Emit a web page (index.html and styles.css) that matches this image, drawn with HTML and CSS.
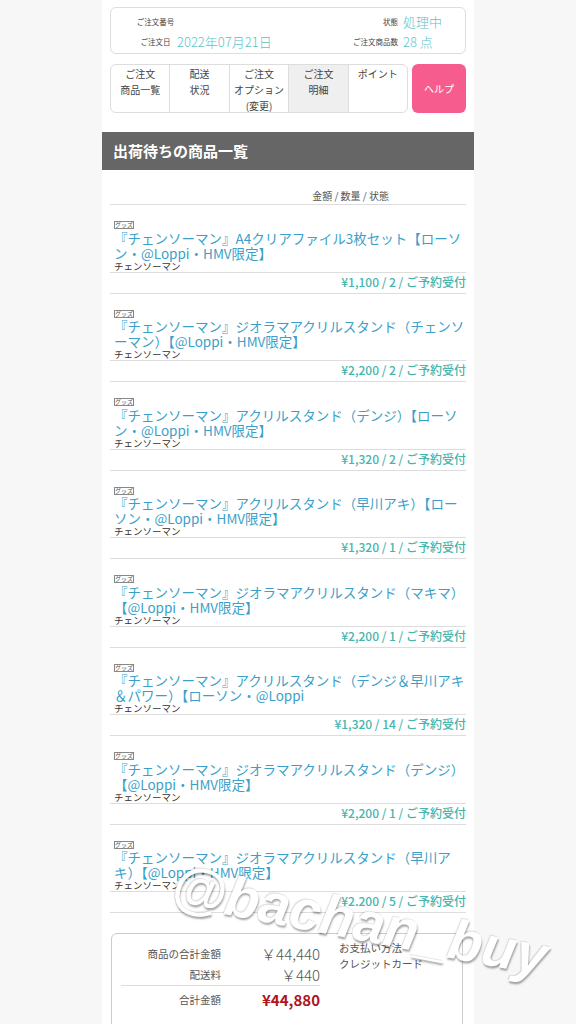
FILE: index.html
```html
<!DOCTYPE html>
<html lang="ja">
<head>
<meta charset="utf-8">
<title>ご注文明細</title>
<link rel="stylesheet" href="styles.css">
</head>
<body>
<div class="page">
  <div class="order-info">
    <span class="lbl lbl-left">ご注文番号</span><span class="val"></span><span class="lbl lbl-right">状態</span><span class="val">処理中</span>
    <span class="lbl lbl-left">ご注文日</span><span class="val">2022年07月21日</span><span class="lbl lbl-right">ご注文商品数</span><span class="val">28 点</span>
  </div>

  <div class="nav">
    <div class="tabs">
      <a class="tab">ご注文<br>商品一覧</a>
      <a class="tab">配送<br>状況</a>
      <a class="tab">ご注文<br>オプション<br>(変更)</a>
      <a class="tab tab-active">ご注文<br>明細</a>
      <a class="tab">ポイント</a>
    </div>
    <a class="help">ヘルプ</a>
  </div>

  <h2 class="section-title">出荷待ちの商品一覧</h2>

  <div class="list-head">金額 / 数量 / 状態</div>

  <ul class="items">
    <li class="item">
      <div class="item-main">
        <span class="tag">グッズ</span>
        <a class="item-title">『チェンソーマン』A4クリアファイル3枚セット【ローソン・@Loppi・HMV限定】</a>
        <div class="item-sub">チェンソーマン</div>
      </div>
      <div class="item-price">¥1,100 / 2 / ご予約受付</div>
    </li>
    <li class="item">
      <div class="item-main">
        <span class="tag">グッズ</span>
        <a class="item-title">『チェンソーマン』ジオラマアクリルスタンド（チェンソーマン）【@Loppi・HMV限定】</a>
        <div class="item-sub">チェンソーマン</div>
      </div>
      <div class="item-price">¥2,200 / 2 / ご予約受付</div>
    </li>
    <li class="item">
      <div class="item-main">
        <span class="tag">グッズ</span>
        <a class="item-title">『チェンソーマン』アクリルスタンド（デンジ）【ローソン・@Loppi・HMV限定】</a>
        <div class="item-sub">チェンソーマン</div>
      </div>
      <div class="item-price">¥1,320 / 2 / ご予約受付</div>
    </li>
    <li class="item">
      <div class="item-main">
        <span class="tag">グッズ</span>
        <a class="item-title">『チェンソーマン』アクリルスタンド（早川アキ）【ローソン・@Loppi・HMV限定】</a>
        <div class="item-sub">チェンソーマン</div>
      </div>
      <div class="item-price">¥1,320 / 1 / ご予約受付</div>
    </li>
    <li class="item">
      <div class="item-main">
        <span class="tag">グッズ</span>
        <a class="item-title">『チェンソーマン』ジオラマアクリルスタンド（マキマ）【@Loppi・HMV限定】</a>
        <div class="item-sub">チェンソーマン</div>
      </div>
      <div class="item-price">¥2,200 / 1 / ご予約受付</div>
    </li>
    <li class="item">
      <div class="item-main">
        <span class="tag">グッズ</span>
        <a class="item-title">『チェンソーマン』アクリルスタンド（デンジ＆早川アキ＆パワー）【ローソン・@Loppi</a>
        <div class="item-sub">チェンソーマン</div>
      </div>
      <div class="item-price">¥1,320 / 14 / ご予約受付</div>
    </li>
    <li class="item">
      <div class="item-main">
        <span class="tag">グッズ</span>
        <a class="item-title">『チェンソーマン』ジオラマアクリルスタンド（デンジ）【@Loppi・HMV限定】</a>
        <div class="item-sub">チェンソーマン</div>
      </div>
      <div class="item-price">¥2,200 / 1 / ご予約受付</div>
    </li>
    <li class="item">
      <div class="item-main">
        <span class="tag">グッズ</span>
        <a class="item-title">『チェンソーマン』ジオラマアクリルスタンド（早川アキ）【@Loppi・HMV限定】</a>
        <div class="item-sub">チェンソーマン</div>
      </div>
      <div class="item-price">¥2.200 / 5 / ご予約受付</div>
    </li>
  </ul>

  <div class="summary">
    <div class="totals">
      <span class="t-lbl">商品の合計金額</span><span class="t-val">￥44,440</span>
      <span class="t-lbl">配送料</span><span class="t-val">￥440</span>
      <span class="t-lbl t-grand">合計金額</span><span class="t-val t-grand t-grand-val">¥44,880</span>
    </div>
    <div class="payment">
      <div>お支払い方法</div>
      <div>クレジットカード</div>
    </div>
  </div>

  <div class="watermark">@bachan_buy</div>
</div>
</body>
</html>
```

FILE: styles.css
```css
* { box-sizing: border-box; }

html, body {
  margin: 0;
  padding: 0;
}

body {
  background: #f7f7f7;
  font-family: "Noto Sans CJK JP", "Noto Sans", sans-serif;
  color: #444;
  overflow: hidden;
}

.page {
  position: relative;
  width: 372px;
  margin: 0 auto;
  min-height: 1024px;
  background: #fff;
  padding-top: 7px;
}

/* order info */
.order-info {
  margin: 0 8px;
  height: 47px;
  border: 1px solid #ddd;
  border-radius: 6px;
  padding: 4px 5px 0 23px;
  display: grid;
  grid-template-columns: 43px 1fr auto 57px;
  grid-auto-rows: 20px;
  align-items: center;
}

.lbl {
  font-size: 7.5px;
  color: #444;
  line-height: 10px;
}
.lbl-left { text-align: center; }
.lbl-right { text-align: right; padding-right: 5px; }

.val {
  font-size: 13px;
  font-weight: 300;
  color: #5fc3c6;
  line-height: 18px;
  white-space: nowrap;
}

/* nav */
.nav {
  margin: 10px 8px 0;
  display: flex;
  gap: 4px;
  height: 49px;
}

.tabs {
  width: 298px;
  display: flex;
  border: 1px solid #ddd;
  border-radius: 6px;
  overflow: hidden;
}

.tab {
  flex: 1;
  text-align: center;
  font-size: 10px;
  line-height: 16px;
  padding-top: 1px;
  color: #444;
  border-right: 1px solid #ddd;
}
.tab:last-child { border-right: none; }
.tab-active { background: #efefef; }

.help {
  flex: 1;
  background: #f65d8e;
  border-radius: 6px;
  color: #fff;
  font-size: 10px;
  display: flex;
  align-items: center;
  justify-content: center;
}

/* section */
.section-title {
  margin: 19px 0 0;
  height: 38px;
  background: #666;
  color: #fff;
  font-size: 15px;
  font-weight: 700;
  line-height: 38px;
  padding-left: 11px;
}

.list-head {
  margin: 0 8px;
  padding: 19px 77px 0 0;
  text-align: right;
  font-size: 10px;
  line-height: 14px;
  height: 35px;
  color: #555;
  border-bottom: 1px solid #ddd;
}

.items {
  list-style: none;
  margin: 0 8px;
  padding: 0;
}

.item {
  padding-top: 16px;
  border-bottom: 1px solid #ddd;
}

.item-main {
  padding-left: 4px;
  border-bottom: 1px solid #ddd;
}

.tag {
  display: block;
  width: 20px;
  height: 8px;
  margin-bottom: 1.5px;
  border: 1px solid #888;
  font-size: 6px;
  line-height: 6px;
  text-align: center;
  color: #555;
  overflow: hidden;
  white-space: nowrap;
}

.item-title {
  display: block;
  font-size: 13.5px;
  line-height: 15px;
  color: #3b9fc9;
}

.item-sub {
  font-size: 9.5px;
  line-height: 11px;
  color: #333;
}

.item-price {
  height: 20px;
  line-height: 18px;
  text-align: right;
  font-size: 12px;
  font-weight: 500;
  color: #45b5ad;
}

/* summary */
.summary {
  margin: 20px 11px 0 9px;
  border: 1px solid #ccc;
  border-radius: 6px;
  height: 120px;
  padding: 9px 0 0 9px;
  display: flex;
  gap: 19px;
}

.totals {
  width: 199px;
  display: grid;
  grid-template-columns: 100px 99px;
  grid-auto-rows: 21px;
  align-items: center;
}

.t-lbl {
  text-align: right;
  font-size: 10.5px;
  color: #555;
}

.t-val {
  text-align: right;
  font-size: 15px;
  font-weight: 300;
  color: #555;
}

.t-grand {
  border-top: 1px solid #ddd;
  margin-top: 3px;
  height: 25px;
  padding-top: 3px;
  line-height: 21px;
}

.t-grand-val {
  color: #b0141e;
  font-weight: 700;
}

.payment {
  font-size: 10.5px;
  line-height: 16px;
  color: #555;
  margin-top: -3px;
}

/* watermark overlay */
.watermark {
  position: absolute;
  left: 67px;
  top: 890px;
  font-family: "Liberation Sans", sans-serif;
  font-weight: 700;
  font-style: italic;
  font-size: 56px;
  line-height: 62px;
  color: #fff;
  white-space: nowrap;
  text-shadow: 1px 2px 2px rgba(0, 0, 0, 0.35), -1px -1px 1px rgba(0, 0, 0, 0.12);
  transform: rotate(11deg);
  transform-origin: center;
  pointer-events: none;
}
```
